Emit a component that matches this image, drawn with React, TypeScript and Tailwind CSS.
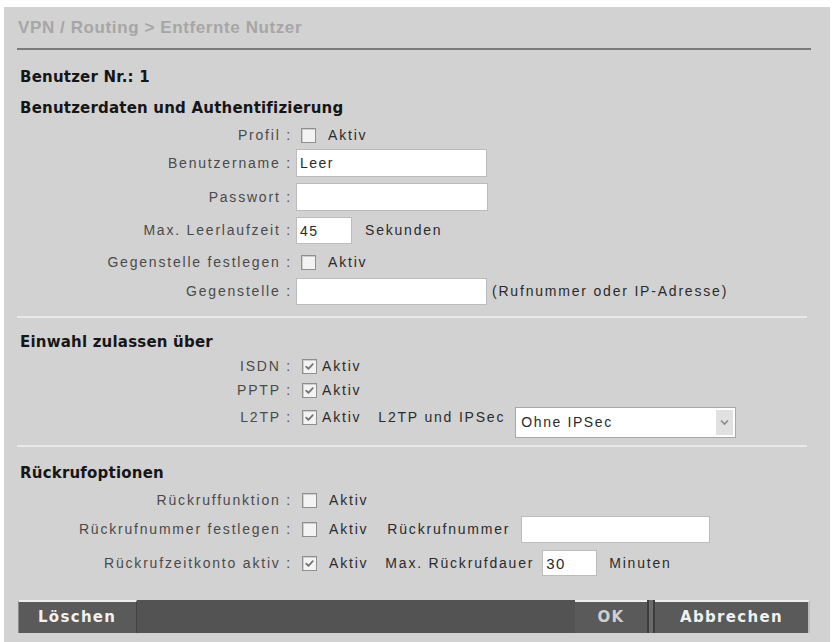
import clsx from "clsx";
import type { ReactNode } from "react";

const sans = "font-['Liberation_Sans',Arial,sans-serif]";
const heavy = "font-['DejaVu_Sans',Verdana,sans-serif] font-bold";
const labelText = `${sans} text-[14px] tracking-[1.8px] text-[#4a4a4a]`;
const plainText = `${sans} text-[14px] tracking-[1.8px] text-[#2b2b2b]`;

function Checkbox({ checked = false, className }: { checked?: boolean; className?: string }) {
  return (
    <span
      className={clsx(
        "flex h-[15px] w-[15px] shrink-0 items-center justify-center border border-[#8f8f8f] bg-[#f3f3f3] shadow-[inset_1px_1px_0_#cfcfcf]",
        className
      )}
    >
      {checked && (
        <svg width="11" height="11" viewBox="0 0 11 11" fill="none" stroke="#727272" strokeWidth="1.7" strokeLinecap="round" strokeLinejoin="round">
          <path d="M2.2 5.6l2.2 2.3L8.8 3.2" />
        </svg>
      )}
    </span>
  );
}

function TextField({ value = "", className }: { value?: string; className?: string }) {
  return (
    <input
      readOnly
      defaultValue={value}
      className={clsx(
        "block shrink-0 border border-[#bcbcbc] bg-white pl-[3px] outline-none",
        sans,
        "text-[14px] tracking-[1.5px] text-[#2a2a2a]",
        className
      )}
    />
  );
}

function Active({ className }: { className?: string }) {
  return <span className={clsx(plainText, className)}>Aktiv</span>;
}

function FormRow({ label, className, children }: { label: string; className: string; children: ReactNode }) {
  return (
    <div className={clsx("flex items-center", className)}>
      <span className={clsx("w-[288px] shrink-0 text-right whitespace-nowrap", labelText)}>{label} :</span>
      <div className="ml-[4px] flex items-center whitespace-nowrap">{children}</div>
    </div>
  );
}

function SectionTitle({ children, className }: { children: ReactNode; className: string }) {
  return (
    <div className={clsx("flex items-center pl-[16px] text-[15px] tracking-[0.2px] text-[#161616]", heavy, className)}>
      {children}
    </div>
  );
}

function Divider({ className }: { className: string }) {
  return <div className={clsx("ml-[13px] h-[2px] w-[790px] bg-[#e8e8e8]", className)} />;
}

function IpsecSelect() {
  return (
    <div className="ml-[10px] mt-[6px] flex h-[31px] w-[221px] items-center border border-[#a8a8a8] bg-white">
      <span className={clsx("flex-1 pl-[5px]", sans, "text-[14px] tracking-[1.6px] text-[#2a2a2a]")}>Ohne IPSec</span>
      <span className="mr-[2px] flex h-[25px] w-[17px] items-center justify-center bg-[#e1e1e1]">
        <svg width="9" height="7" viewBox="0 0 9 7" fill="none" stroke="#8a8a8a" strokeWidth="1.6">
          <path d="M1 1.5l3.5 3.5L8 1.5" />
        </svg>
      </span>
    </div>
  );
}

function BarButton({ children, className }: { children: ReactNode; className: string }) {
  return (
    <button
      className={clsx(
        "flex h-full items-center border-t-2 border-t-[#eeeeee] bg-[#5a5a5a] text-[15px] tracking-[1.3px]",
        heavy,
        className
      )}
    >
      {children}
    </button>
  );
}

export default function App() {
  return (
    <div className="min-h-screen bg-white pl-[4px] pt-[7px]">
      <div className="flex h-[635px] w-[826px] flex-col overflow-hidden bg-[#d2d2d2]">
        {/* breadcrumb */}
        <div className={clsx("flex h-[41px] items-center pl-[14px] text-[17px] font-bold tracking-[0.6px] text-[#a6a6a6]", sans)}>
          VPN / Routing &gt; Entfernte Nutzer
        </div>
        <div className="ml-[13px] h-[2px] w-[794px] bg-[#7b7b7b]" />

        <SectionTitle className="mt-[12px] h-[30px]">Benutzer Nr.: 1</SectionTitle>
        <SectionTitle className="h-[32px]">Benutzerdaten und Authentifizierung</SectionTitle>

        <FormRow label="Profil" className="h-[22px]">
          <Checkbox className="ml-[5px]" />
          <Active className="ml-[12px]" />
        </FormRow>
        <FormRow label="Benutzername" className="h-[34px]">
          <TextField value="Leer" className="h-[28px] w-[191px]" />
        </FormRow>
        <FormRow label="Passwort" className="h-[34px]">
          <TextField className="h-[28px] w-[192px]" />
        </FormRow>
        <FormRow label="Max. Leerlaufzeit" className="h-[33px]">
          <TextField value="45" className="h-[27px] w-[56px]" />
          <span className={clsx("ml-[13px]", plainText)}>Sekunden</span>
        </FormRow>
        <FormRow label="Gegenstelle festlegen" className="h-[30px]">
          <Checkbox className="ml-[5px]" />
          <Active className="ml-[12px]" />
        </FormRow>
        <FormRow label="Gegenstelle" className="h-[28px]">
          <TextField className="h-[27px] w-[191px]" />
          <span className={clsx("ml-[5px]", plainText)}>(Rufnummer oder IP-Adresse)</span>
        </FormRow>

        <Divider className="mt-[11px]" />

        <SectionTitle className="mt-[12px] h-[24px]">Einwahl zulassen über</SectionTitle>
        <FormRow label="ISDN" className="h-[25px]">
          <Checkbox checked className="ml-[6px]" />
          <Active className="ml-[5px]" />
        </FormRow>
        <FormRow label="PPTP" className="h-[22px]">
          <Checkbox checked className="ml-[6px]" />
          <Active className="ml-[5px]" />
        </FormRow>
        <div className="flex h-[38px] items-start">
          <span className={clsx("flex h-[32px] w-[288px] shrink-0 items-center justify-end", labelText)}>L2TP :</span>
          <div className="ml-[4px] flex h-[32px] items-center whitespace-nowrap">
            <Checkbox checked className="ml-[6px]" />
            <Active className="ml-[5px]" />
            <span className={clsx("ml-[17px]", plainText)}>L2TP und IPSec</span>
          </div>
          <IpsecSelect />
        </div>

        <Divider className="mt-[6px]" />

        <SectionTitle className="mt-[14px] h-[24px]">Rückrufoptionen</SectionTitle>
        <FormRow label="Rückruffunktion" className="h-[30px]">
          <Checkbox className="ml-[6px]" />
          <Active className="ml-[12px]" />
        </FormRow>
        <FormRow label="Rückrufnummer festlegen" className="h-[29px]">
          <Checkbox className="ml-[6px]" />
          <Active className="ml-[12px]" />
          <span className={clsx("ml-[19px]", plainText)}>Rückrufnummer</span>
          <TextField className="ml-[11px] h-[27px] w-[189px]" />
        </FormRow>
        <FormRow label="Rückrufzeitkonto aktiv" className="mt-[4px] h-[30px]">
          <Checkbox checked className="ml-[6px]" />
          <Active className="ml-[12px]" />
          <span className={clsx("ml-[17px]", plainText)}>Max. Rückrufdauer</span>
          <TextField value="30" className="ml-[8px] h-[26px] w-[55px] text-[15px]" />
          <span className={clsx("ml-[12px]", plainText)}>Minuten</span>
        </FormRow>

        {/* action bar */}
        <div className="ml-[14px] mt-[22px] flex h-[33px] w-[792px] bg-[#535353]">
          <BarButton className="w-[119px] border-l border-l-[#8a8a8a] border-r border-r-[#444444] pl-[19px] text-[#f1f1f1]">
            Löschen
          </BarButton>
          <div className="flex-1" />
          <BarButton className="w-[72px] justify-center text-[#cfcfcf]">OK</BarButton>
          <div className="w-[8px] border-x-2 border-x-[#3d3d3d] bg-[#6a6a6a]" />
          <BarButton className="w-[155px] justify-center border-r-2 border-r-[#bdbdbd] text-[#f1f1f1]">
            Abbrechen
          </BarButton>
        </div>
      </div>
    </div>
  );
}
